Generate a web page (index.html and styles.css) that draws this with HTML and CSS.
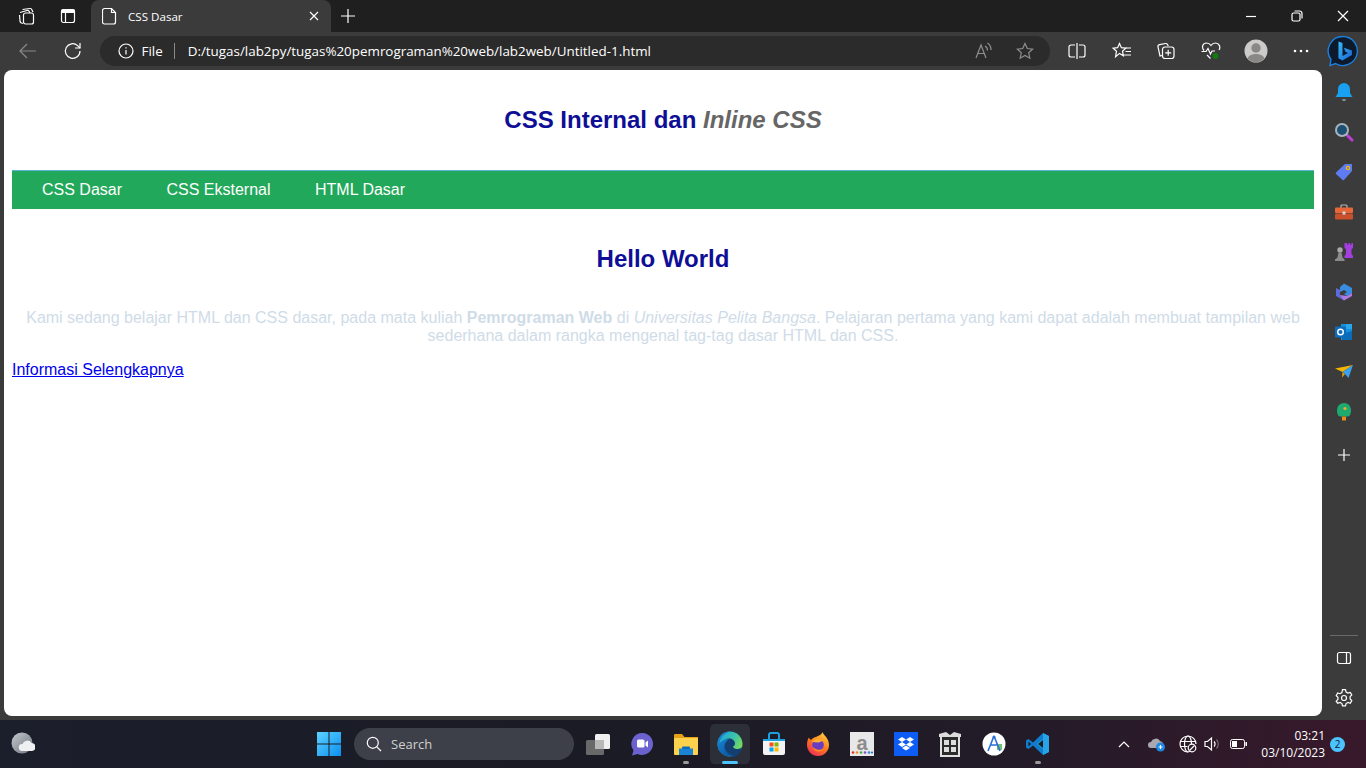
FILE: index.html
```html
<!DOCTYPE html>
<html lang="en">
<head>
  <meta charset="UTF-8">
  <meta name="viewport" content="width=device-width, initial-scale=1.0">
  <title>CSS Dasar</title>
  <link rel="stylesheet" href="styles.css">
</head>
<body>
  <div class="browser">
    <!-- tab strip -->
    <div class="tabstrip">
      <div class="strip-btn first">
        <svg width="20" height="20" viewBox="0 0 20 20" class="line"><path d="M6.5 3.5 14 2.5a2 2 0 0 1 2 1.5l1 2"/><path d="M4 6.5 11 4.5a2 2 0 0 1 2.5 1.5l.5 1"/><path d="M3.5 9l.6 6.5a2 2 0 0 0 1.4 1.5l1.5.5"/><rect x="7.5" y="7" width="10" height="11" rx="2"/></svg>
      </div>
      <div class="strip-btn">
        <svg width="18" height="18" viewBox="0 0 18 18" class="line"><rect x="2.5" y="2.5" width="13" height="13" rx="2"/><path d="M2.5 5.5h13M6.5 5.5v10"/><path d="M3 3h12v2.5H3z" fill="#fff"/></svg>
      </div>
      <div class="tab">
        <svg width="16" height="18" viewBox="0 0 16 18" class="line"><path d="M2.5 1.5h7l4 4v9.500a2 2 0 0 1-2 2h-9a2 2 0 0 1-2-2v-11.500a2 2 0 0 1 2-2z"/><path d="M9.500 1.500v4h4"/></svg>
        <span class="tab-title">CSS Dasar</span>
        <svg class="tab-close line" width="10" height="10" viewBox="0 0 10 10"><path d="M1 1l8 8M9 1l-8 8"/></svg>
      </div>
      <div class="new-tab">
        <svg width="16" height="16" viewBox="0 0 16 16" class="line"><path d="M8 1v14M1 8h14"/></svg>
      </div>
      <div class="win-controls">
        <div class="win-btn"><svg width="12" height="12" viewBox="0 0 12 12" class="line"><path d="M1 6.500h10"/></svg></div>
        <div class="win-btn"><svg width="12" height="12" viewBox="0 0 12 12" class="line"><rect x="1" y="3" width="8" height="8" rx="1.500"/><path d="M3.500 1h5a2.500 2.500 0 0 1 2.500 2.500v5"/></svg></div>
        <div class="win-btn"><svg width="12" height="12" viewBox="0 0 12 12" class="line"><path d="M1 1l10 10M11 1l-10 10"/></svg></div>
      </div>
    </div>

    <!-- address bar row -->
    <div class="toolbar">
      <div class="tool-btn dim">
        <svg width="20" height="20" viewBox="0 0 20 20" class="line"><path d="M18 10H2M9 3l-7 7 7 7"/></svg>
      </div>
      <div class="tool-btn">
        <svg width="20" height="20" viewBox="0 0 20 20" class="line"><path d="M17 10a7.300 7.300 0 1 1-2.400-5.400L17 7"/><path d="M17 2v5h-5"/></svg>
      </div>
      <div class="addressbar">
        <svg width="16" height="16" viewBox="0 0 16 16" class="line"><circle cx="8" cy="8" r="7"/><path d="M8 7v4.500M8 4.300v1.200"/></svg>
        <span class="addr-scheme">File</span>
        <span class="addr-sep"></span>
        <span class="addr-url">D:/tugas/lab2py/tugas%20pemrograman%20web/lab2web/Untitled-1.html</span>
        <span class="addr-right">
          <svg width="20" height="18" viewBox="0 0 20 18" class="line grey"><path d="M2 16 7 3l5 13M3.800 11.500h6.400"/><path d="M11 4a5 5 0 0 1 2.500 4.500M13.500 1a8 8 0 0 1 3.500 7"/></svg>
          <svg width="18" height="18" viewBox="0 0 18 18" class="line grey"><path d="M9 1.500l2.300 5 5.400.6-4 3.700 1.100 5.400L9 13.500l-4.800 2.700 1.100-5.400-4-3.700 5.400-.6z"/></svg>
        </span>
      </div>
      <div class="tool-group">
        <div class="tool-btn">
          <svg width="18" height="18" viewBox="0 0 18 18" class="line"><path d="M7 3H3a2 2 0 0 0-2 2v8a2 2 0 0 0 2 2h4M11 3h4a2 2 0 0 1 2 2v8a2 2 0 0 1-2 2h-4M9 1v16"/></svg>
        </div>
        <div class="tool-btn">
          <svg width="20" height="20" viewBox="0 0 20 20" class="line"><path d="M7.500 2.500l1.900 4.200 4.400.5-3.300 3 .9 4.500-3.900-2.300-3.900 3.300.9-5.500-3.300-3 4.400-.5z"/><path d="M13.500 7h5.500M13.500 10.500h5.500M11.500 14h7.500"/></svg>
        </div>
        <div class="tool-btn">
          <svg width="20" height="20" viewBox="0 0 20 20" class="line"><path d="M6 14.500 4 15 2 6a2 2 0 0 1 1.500-2.300l6-1.200a2 2 0 0 1 2 1l.8 1.500"/><rect x="6.500" y="6" width="11.500" height="11.500" rx="2.500"/><path d="M12.200 8.800v6M9.200 11.800h6"/></svg>
        </div>
        <div class="tool-btn health">
          <svg width="20" height="20" viewBox="0 0 20 20" class="line"><path d="M3 9.500C0 6 2 2 5.500 2c2 0 3.500 1 4.500 2.500C11 3 12.500 2 14.500 2 18 2 20 6 18 9M.5 10.500h4.500l2-3 2.500 5.500 1.500-3h3M6 14l3.500 3.500"/><circle cx="14.500" cy="15" r="3.500" fill="#107c10" stroke="#3b3b3b"/></svg>
        </div>
        <div class="tool-btn">
          <svg width="24" height="24" viewBox="0 0 24 24"><circle cx="12" cy="12" r="11.500" fill="#cdcbc9"/><circle cx="12" cy="9" r="4.700" fill="#8a8886"/><path d="M3.500 19.500c1.500-3.500 5-4.500 8.500-4.500s7 1 8.500 4.500a11.500 11.500 0 0 1-17 0z" fill="#8a8886"/></svg>
        </div>
        <div class="tool-btn">
          <svg width="16" height="4" viewBox="0 0 16 4"><circle cx="2" cy="2" r="1.300" fill="#fff"/><circle cx="8" cy="2" r="1.300" fill="#fff"/><circle cx="14" cy="2" r="1.300" fill="#fff"/></svg>
        </div>
      </div>
      <div class="bing-btn">
        <svg width="32" height="32" viewBox="0 0 32 32">
          <defs><linearGradient id="bingGrad" x1="0" y1="0" x2="1" y2="1"><stop offset="0" stop-color="#36bdf4"/><stop offset="1" stop-color="#1a62d8"/></linearGradient></defs>
          <path d="M16 1.500a14.500 14.500 0 1 1-7.500 27L3 30.500l1-6A14.500 14.500 0 0 1 16 1.500z" fill="#0c1a2c" stroke="#1b7fdc" stroke-width="1.400"/>
          <path d="M11.500 6.500l4 1.500v13l5.500-3-2.500-1.300-1.600-4 8 2.800v4.500l-9.500 5.500-4-2.300z" fill="url(#bingGrad)"/>
        </svg>
      </div>
    </div>

    <div class="workspace">
      <!-- rendered page -->
      <main class="page">
        <header class="site-head">
          <h1>CSS Internal dan <em class="grey-em">Inline CSS</em></h1>
        </header>
        <nav class="site-nav">
          <ul>
            <li><a href="#">CSS Dasar</a></li>
            <li><a href="#">CSS Eksternal</a></li>
            <li><a href="#">HTML Dasar</a></li>
          </ul>
        </nav>
        <h2>Hello World</h2>
        <p class="intro">Kami sedang belajar HTML dan CSS dasar, pada mata kuliah <strong>Pemrograman Web</strong> di <em>Universitas Pelita Bangsa</em>. Pelajaran pertama yang kami dapat adalah membuat tampilan web sederhana dalam rangka mengenal tag-tag dasar HTML dan CSS.</p>
        <a class="more" href="#">Informasi Selengkapnya</a>
      </main>

      <!-- edge sidebar -->
      <aside class="sidebar">
        <div class="side-icon"><svg width="18" height="20" viewBox="0 0 18 20"><path d="M9 1a6 6 0 0 1 6 6v4l2.500 4H.5L3 11V7a6 6 0 0 1 6-6z" fill="#1aa0f0"/><path d="M6.500 17.500h5L9 19z" fill="#9fd4f5"/></svg></div>
        <div class="side-icon"><svg width="20" height="20" viewBox="0 0 20 20"><circle cx="8" cy="8" r="6" fill="#1d4f73" stroke="#a8b4bc" stroke-width="2"/><path d="M12.500 12.500l2 2" stroke="#a8b4bc" stroke-width="2"/><path d="M14 14l4 4" stroke="#c13bd8" stroke-width="3" stroke-linecap="round"/></svg></div>
        <div class="side-icon"><svg width="18" height="18" viewBox="0 0 18 18"><path d="M10 1h6.500a.5.5 0 0 1 .5.500V8l-8 9a1 1 0 0 1-1.400 0L1 11a1 1 0 0 1 0-1.400z" fill="#5e7bf2"/><circle cx="13" cy="5" r="1.700" fill="none" stroke="#f5b800" stroke-width="1.200"/></svg></div>
        <div class="side-icon"><svg width="18" height="16" viewBox="0 0 18 16"><path d="M6 4V2a1 1 0 0 1 1-1h4a1 1 0 0 1 1 1v2" fill="none" stroke="#b8b8b8" stroke-width="1.200"/><rect y="3.500" width="18" height="5.500" rx="1" fill="#e8663a"/><rect y="9.500" width="18" height="6" rx="1" fill="#c8502a"/><rect x="7.500" y="7.500" width="3" height="3" rx=".5" fill="#d8d8d8"/></svg></div>
        <div class="side-icon"><svg width="18" height="20" viewBox="0 0 18 20"><path d="M10 1h2v1.500h1.500V1h1.500v1.500h1.500V1H18v5l-1.500 1v5l1.500 2v2H9.500v-2l1.500-2V7L9.500 6V1z" fill="#a33fe0"/><circle cx="5" cy="8" r="2.700" fill="#a8a8a8"/><path d="M3.500 10.500h3l1 5 2 2V19H0v-1.500l2.500-2z" fill="#8c8c8c"/></svg></div>
        <div class="side-icon"><svg width="18" height="18" viewBox="0 0 18 18"><path d="M9 .5 17 5v5l-5 3-3-2 3-2-3-2-4 2V4z" fill="#3a8ce0"/><path d="M1 5l4 2v5l5 3-1 2.500L1 13z" fill="#5c6bd8"/><path d="M5 12l7 1 5-3v3l-8 4.500z" fill="#b07ae0"/></svg></div>
        <div class="side-icon"><svg width="18" height="18" viewBox="0 0 18 18"><path d="M6 1h10a1 1 0 0 1 1 1v14a1 1 0 0 1-1 1H6z" fill="#1490df"/><path d="M11 1h6v5h-6z" fill="#28a8ea"/><path d="M7 11l10-3v9H7z" fill="#0a6cb8"/><rect y="3.500" width="11" height="11" rx="1" fill="#0f6cbd"/><circle cx="5.500" cy="9" r="2.800" fill="none" stroke="#fff" stroke-width="1.400"/></svg></div>
        <div class="side-icon"><svg width="18" height="14" viewBox="0 0 18 14"><path d="M0 3.500 18 0 7.500 7z" fill="#f5b400"/><path d="M18 0 7.500 7l1.500 1 1 1 3.500 4z" fill="#3aa0f0"/><path d="M7.500 7 7 12.500 10 9z" fill="#e8a000"/></svg></div>
        <div class="side-icon"><svg width="16" height="20" viewBox="0 0 16 20"><path d="M8 1c4 0 7 3 7 7.500 0 2.500-1 6-3 6H4c-2 0-3-3.500-3-6C1 4 4 1 8 1z" fill="#1eaa6e"/><rect x="6" y="14.500" width="4" height="4" fill="#e88a1a"/><circle cx="9" cy="6.500" r="1.600" fill="#f0a830"/></svg></div>
        <div class="side-icon side-add"><svg width="14" height="14" viewBox="0 0 14 14" class="line"><path d="M7 1v12M1 7h12"/></svg></div>
        <div class="side-bottom">
          <div class="side-rule"></div>
          <div class="side-icon"><svg width="16" height="14" viewBox="0 0 16 14" class="line"><rect x="1.500" y="1.500" width="13" height="11" rx="2"/><path d="M10.500 1.500v11"/></svg></div>
          <div class="side-icon"><svg width="18" height="18" viewBox="0 0 18 18" class="line"><path d="M7.500 1.500h3l.6 2.300 1.900 1.100 2.300-.7 1.500 2.600-1.700 1.700v2.200l1.700 1.700-1.500 2.600-2.300-.7-1.900 1.100-.6 2.300h-3l-.6-2.300-1.900-1.100-2.300.7L1.200 13l1.700-1.700V9.100L1.200 7.400l1.500-2.600 2.300.7 1.900-1.100z" transform="translate(0 -.8)"/><circle cx="9" cy="9" r="2.500"/></svg></div>
        </div>
      </aside>
    </div>

    <!-- windows taskbar -->
    <footer class="taskbar">
      <div class="weather">
        <svg width="24" height="24" viewBox="0 0 24 24"><defs><linearGradient id="moonGrad" x1="0" y1="0" x2="1" y2="1"><stop offset="0" stop-color="#c4c9ce"/><stop offset="1" stop-color="#6d747b"/></linearGradient></defs><circle cx="11" cy="11" r="10.500" fill="url(#moonGrad)"/><path d="M11 21a3.500 3.500 0 0 1 .5-7 5 5 0 0 1 9-1 4 4 0 0 1 2 7.500 3 3 0 0 1-1.500.500z" fill="#eef0f2" transform="translate(0 -2)"/></svg>
      </div>
      <div class="task-center">
        <div class="task-start">
          <svg width="24" height="24" viewBox="0 0 24 24"><defs><linearGradient id="winGrad" x1="0" y1="0" x2="1" y2="1"><stop offset="0" stop-color="#5cd3ff"/><stop offset="1" stop-color="#0c8ff0"/></linearGradient></defs><path d="M0 0h11.500v11.500H0zM12.500 0H24v11.500H12.500zM0 12.500h11.500V24H0zM12.500 12.500H24V24H12.500z" fill="url(#winGrad)"/></svg>
        </div>
        <div class="task-search">
          <svg width="16" height="16" viewBox="0 0 16 16" class="line"><circle cx="6.800" cy="6.800" r="5.500"/><path d="M10.800 10.800 15 15"/></svg>
          <span>Search</span>
        </div>
        <div class="task-apps">
          <div class="task-app"><svg width="24" height="22" viewBox="0 0 24 22"><rect x="9" y="1" width="15" height="15" rx="1.500" fill="#f0f0f0"/><rect y="7" width="18" height="15" rx="1.500" fill="#6e6e6e" opacity=".95"/><rect x="9" y="7" width="9" height="9" fill="#b8b8b8"/></svg></div>
          <div class="task-app"><svg width="24" height="24" viewBox="0 0 24 24"><path d="M12.500 1a11 11 0 1 1-5 21L2 23.500l1.500-5A11 11 0 0 1 12.500 1z" fill="#6b62cf"/><rect x="7" y="7.500" width="7.500" height="8" rx="1.500" fill="#fff"/><path d="M15.500 10.500 18 8.500v7l-2.500-2z" fill="#fff"/></svg></div>
          <div class="task-app running"><svg width="24" height="22" viewBox="0 0 24 22"><path d="M0 2a1 1 0 0 1 1-1h7l2.500 3H24v4H0z" fill="#e6a117"/><rect y="5" width="24" height="17" rx="1" fill="#ffd24d"/><path d="M5 15.500h14v6.500H5z" fill="#1b83d4"/><rect x="8" y="13.500" width="8" height="2.500" rx="1" fill="#0f6cbd"/></svg></div>
          <div class="task-app active"><svg width="26" height="26" viewBox="0 0 26 26"><defs><linearGradient id="edgeGreen" x1="0" y1="0" x2="1" y2=".6"><stop offset="0" stop-color="#1b9de2"/><stop offset=".55" stop-color="#35c1b0"/><stop offset="1" stop-color="#7fdc55"/></linearGradient><linearGradient id="edgeBlue" x1="0" y1="0" x2=".6" y2="1"><stop offset="0" stop-color="#1a8fe0"/><stop offset="1" stop-color="#0c59a4"/></linearGradient></defs><circle cx="13" cy="13" r="12.500" fill="url(#edgeGreen)"/><path d="M25.500 15c-.5 2-3.500 3.500-6.500 3-2-.3-3-1.500-3-2.500 1-.5 2-1.500 2-3 0-3-3-5-6-5-3 0-5 2-6 5v6c2 4 6 7.500 9.500 7.500 5 0 9.500-5 10-11z" fill="#123e70"/><path d="M13 .5C6 .5.500 6 .5 13c0 7 5.500 12.500 12.500 12.500 1.500 0 3-.3 4-1-5-.5-9-4-9.500-8.500-.3-3 1.500-6 4.500-7.500C9 7.500 5 9 2.500 12 3.500 6 8 2 13 .5z" fill="url(#edgeBlue)"/></svg></div>
          <div class="task-app"><svg width="24" height="24" viewBox="0 0 24 24"><path d="M1 7h22v14a2 2 0 0 1-2 2H3a2 2 0 0 1-2-2z" fill="#f3f3f3"/><path d="M7 8V3a2 2 0 0 1 2-2h6a2 2 0 0 1 2 2v5" fill="none" stroke="#1ca0e0" stroke-width="2"/><path d="M1 7h22v2H1z" fill="#1ca0e0"/><rect x="7.500" y="10.500" width="4" height="4" fill="#f25022"/><rect x="12.500" y="10.500" width="4" height="4" fill="#7fba00"/><rect x="7.500" y="15.500" width="4" height="4" fill="#00a4ef"/><rect x="12.500" y="15.500" width="4" height="4" fill="#ffb900"/></svg></div>
          <div class="task-app"><svg width="24" height="24" viewBox="0 0 24 24"><defs><linearGradient id="foxGrad" x1=".8" y1="0" x2=".2" y2="1"><stop offset="0" stop-color="#ffd33d"/><stop offset=".5" stop-color="#ff7a1f"/><stop offset="1" stop-color="#ee2a5a"/></linearGradient></defs><path d="M16.500 0c.5 3 6.500 5.500 6.500 13a11 11 0 0 1-22 0c0-3 .5-5.500 2-7.500.5 1 1 2 2 2.500 1-1.500 2.500-2.500 4.500-3 2.500-.8 6-2 7-5z" fill="url(#foxGrad)"/><circle cx="12" cy="13" r="5.800" fill="#6a3cc4"/><path d="M6 10c2-3.500 8-4.500 11-1-2 .2-3 1.500-5 1.500S8 10 6 10z" fill="#ffb02e"/><path d="M6.500 15c1 3 3.500 5 7 4.500 1.500-.2 3-1 4-2.500-3 1.500-7 1-11-2z" fill="#ff8a1f"/></svg></div>
          <div class="task-app"><svg width="24" height="24" viewBox="0 0 24 24"><rect width="24" height="24" fill="#e8e8e8"/><text x="12" y="18" class="amazon-a">a</text><g><circle cx="3" cy="20.500" r="1.300" fill="#e52b2b"/><circle cx="7" cy="20.500" r="1.300" fill="#f58a1f"/><circle cx="11" cy="20.500" r="1.300" fill="#3fae49"/><circle cx="15" cy="20.500" r="1.300" fill="#8a4fc0"/><circle cx="19" cy="20.500" r="1.300" fill="#2a8fe0"/><circle cx="22" cy="20.500" r="1" fill="#1565c0"/></g></svg></div>
          <div class="task-app"><svg width="24" height="24" viewBox="0 0 24 24"><rect width="24" height="24" fill="#0d5cf5"/><path d="M8 5l4 2.500L8 10 4 7.500zM16 5l4 2.500-4 2.500-4-2.500zM8 10l4 2.500L8 15l-4-2.500zM16 10l4 2.500-4 2.500-4-2.500zM8 16l4-2.500 4 2.500-4 2.500z" fill="#fff"/></svg></div>
          <div class="task-app"><svg width="22" height="26" viewBox="0 0 22 26"><path d="M2 5h18v20H2z" fill="#2b2b2b" stroke="#e0e0e0" stroke-width="2"/><path d="M0 3l7-2 4 3 4-3 7 2v3H0z" fill="#dcdcdc"/><rect x="5" y="9" width="5" height="5" fill="#dcdcdc"/><rect x="12" y="9" width="5" height="5" fill="#dcdcdc"/><rect x="5" y="16" width="5" height="5" fill="#dcdcdc"/><rect x="12" y="16" width="5" height="5" fill="#dcdcdc"/></svg></div>
          <div class="task-app"><svg width="24" height="24" viewBox="0 0 24 24"><circle cx="12" cy="12" r="11.500" fill="#fff"/><path d="M15 12h5v6h-5z" fill="#6ec56e"/><path d="M12 4 6 19M12 4l6 15M8.500 13h7" fill="none" stroke="#2a6fd8" stroke-width="1.600"/><circle cx="12" cy="5" r="1.500" fill="#2a6fd8"/></svg></div>
          <div class="task-app running"><svg width="24" height="24" viewBox="0 0 24 24"><path d="M17 1l6 3v16l-6 3L7 13.500 2.500 17 0 15.500V8.500L2.500 7 7 10.500z" fill="#0f7dcc"/><path d="M17 1l6 3v16l-6 3zM17 7l-6 5 6 5z" fill="#28a3e8"/><path d="M2.500 9.500v5L5 12z" fill="#1b1c25"/><path d="M17 8v8l-5-4z" fill="#1b1c25"/></svg></div>
        </div>
      </div>
      <div class="tray">
        <svg class="tray-chevron line" width="12" height="8" viewBox="0 0 12 8"><path d="M1 7l5-5 5 5"/></svg>
        <svg class="tray-cloud" width="18" height="16" viewBox="0 0 18 16"><path d="M3 12a3 3 0 0 1 0-6 5 5 0 0 1 9-1 4 4 0 0 1 2 7z" fill="#a9a9ad"/><circle cx="12.500" cy="11" r="4.500" fill="#1e88e5"/><path d="M10.500 11h4M12.500 9v4" stroke="#fff" stroke-width="1.200"/></svg>
        <svg class="tray-globe line" width="18" height="18" viewBox="0 0 18 18"><path d="M9 17a8 8 0 1 1 8-8"/><ellipse cx="9" cy="9" rx="3.500" ry="8"/><path d="M1.500 6.500h15M1.500 11.500h7"/><circle cx="13" cy="13" r="3.800" fill="#2a1a28"/><path d="M10.500 15.500l5-5"/></svg>
        <svg class="tray-sound line" width="16" height="16" viewBox="0 0 16 16"><path d="M1 5.500h2.500L7.500 2v12l-4-3.500H1z"/><path d="M10 5.500a3.500 3.500 0 0 1 0 5"/><path d="M12.500 3.500a6.500 6.500 0 0 1 0 9" opacity=".35"/></svg>
        <svg class="tray-battery" width="17" height="10" viewBox="0 0 17 10"><rect x=".5" y=".5" width="14" height="9" rx="2" fill="none" stroke="#fff"/><rect x="2" y="2" width="5" height="6" fill="#fff"/><rect x="15.500" y="3" width="1.500" height="4" fill="#fff"/></svg>
        <div class="clock">
          <span>03:21</span>
          <span>03/10/2023</span>
        </div>
        <div class="notif">2</div>
      </div>
    </footer>
  </div>
</body>
</html>
```

FILE: styles.css
```css
* {
  box-sizing: border-box;
}
html, body {
  margin: 0;
  height: 100%;
  overflow: hidden;
}
body {
  font-family: "Liberation Sans", Arial, sans-serif;
  background: #3b3b3b;
}
.browser {
  display: flex;
  flex-direction: column;
  width: 1366px;
  height: 768px;
}
.line {
  fill: none;
  stroke: #fff;
  stroke-width: 1.2;
  flex: none;
}
.line.grey {
  stroke: #8f8f8f;
}

/* tab strip */
.tabstrip {
  display: flex;
  align-items: flex-end;
  height: 32px;
  background: #1f1f1f;
}
.strip-btn {
  display: flex;
  align-items: center;
  justify-content: center;
  width: 42px;
  height: 32px;
}
.strip-btn.first {
  margin-left: 5px;
}
.tab {
  display: flex;
  align-items: center;
  width: 240px;
  height: 32px;
  margin-left: 2px;
  padding: 0 11px;
  background: #3b3b3b;
  border-radius: 8px 8px 0 0;
}
.tab-title {
  margin-left: 10px;
  font: 11.600px "Open Sans", "Noto Sans", sans-serif;
  color: #fff;
}
.tab-close {
  margin-left: auto;
  margin-right: 1px;
}
.new-tab {
  display: flex;
  align-items: center;
  justify-content: center;
  width: 34px;
  height: 32px;
}
.win-controls {
  display: flex;
  margin-left: auto;
}
.win-btn {
  display: flex;
  align-items: center;
  justify-content: center;
  width: 46px;
  height: 32px;
}

/* toolbar */
.toolbar {
  display: flex;
  align-items: center;
  height: 38px;
  padding-left: 6px;
  background: #3b3b3b;
}
.tool-btn {
  display: flex;
  align-items: center;
  justify-content: center;
  flex: none;
  width: 44.5px;
  height: 30px;
}
.tool-btn.dim {
  opacity: 0.4;
}
.addressbar {
  display: flex;
  align-items: center;
  flex: none;
  width: 950px;
  height: 30px;
  margin-left: 4.500px;
  padding: 0 16px 0 18px;
  background: #2b2b2b;
  border-radius: 15px;
  color: #fff;
  font: 13.400px "Open Sans", "Noto Sans", sans-serif;
}
.addr-scheme {
  margin-left: 8px;
}
.addr-sep {
  width: 1px;
  height: 16px;
  margin: 0 13px 0 11px;
  background: #8a8a8a;
}
.addr-url {
  white-space: nowrap;
}
.addr-right {
  display: flex;
  align-items: center;
  gap: 22px;
  margin-left: auto;
}
.tool-group {
  display: flex;
  margin-left: 5px;
}
.tool-group .tool-btn {
  width: 44.800px;
}
.bing-btn {
  display: flex;
  align-items: center;
  justify-content: center;
  width: 44px;
  margin-left: -2px;
}

/* workspace */
.workspace {
  display: flex;
  height: 650px;
}
.page {
  width: 1318px;
  height: 646px;
  margin-left: 4px;
  padding: 8px;
  background: #fff;
  border-radius: 8px;
  color: #000;
  font-size: 16px;
}
.site-head {
  padding: 12px 0 20px;
}
.page h1 {
  margin: 16px 0;
  font-size: 24px;
  line-height: 28px;
  text-align: center;
  color: #0e0e96;
}
.grey-em {
  color: #666;
}
.site-nav {
  height: 39px;
  background: #22a85a;
  border-top: 1px solid #5ab4d8;
}
.site-nav ul {
  margin: 0;
  padding: 0 10px;
  list-style: none;
}
.site-nav li {
  display: inline;
}
.site-nav a {
  display: inline-block;
  padding: 0 20px;
  line-height: 37px;
  color: #fff;
  text-decoration: none;
}
.page h2 {
  margin: 36px 0 0;
  font-size: 24px;
  line-height: 28px;
  text-align: center;
  color: #0e0e96;
}
.intro {
  margin: 36px 0 16px;
  line-height: 18px;
  text-align: center;
  color: #cfdce8;
}
.more {
  color: #0000ee;
}

/* sidebar */
.sidebar {
  display: flex;
  flex-direction: column;
  align-items: center;
  width: 44px;
  height: 650px;
  padding-top: 2px;
  background: #3b3b3b;
}
.side-icon {
  display: flex;
  align-items: center;
  justify-content: center;
  flex: none;
  width: 44px;
  height: 40px;
}
.side-add {
  margin-top: 3px;
}
.side-bottom {
  display: flex;
  flex-direction: column;
  align-items: center;
  margin-top: auto;
  margin-bottom: 2px;
}
.side-rule {
  width: 28px;
  height: 1px;
  margin-bottom: 2px;
  background: #6a6a6a;
}

/* taskbar */
.taskbar {
  display: flex;
  align-items: center;
  position: relative;
  height: 48px;
  background: linear-gradient(90deg, #1b1e2b 0%, #1a1b24 45%, #231b28 75%, #38192b 100%);
}
.weather {
  display: flex;
  width: 46px;
  padding-left: 11px;
}
.task-center {
  display: flex;
  align-items: center;
  margin-left: 271px;
}
.task-start {
  display: flex;
  margin-right: 13px;
}
.task-search {
  display: flex;
  align-items: center;
  gap: 9px;
  width: 220px;
  height: 32px;
  padding-left: 12px;
  background: #3d4048;
  border-radius: 16px;
  color: #d0d0d0;
  font: 13px "Open Sans", "Noto Sans", sans-serif;
}
.task-apps {
  display: flex;
  margin-left: 2px;
}
.task-app {
  display: flex;
  align-items: center;
  justify-content: center;
  position: relative;
  width: 44px;
  height: 40px;
}
.task-app.active {
  padding: 0 2px;
  background: #2d2f38 content-box;
  border-radius: 6px;
}
.task-app.active::after,
.task-app.running::after {
  content: "";
  position: absolute;
  bottom: 0;
  left: 50%;
  width: 6px;
  height: 3px;
  margin-left: -3px;
  background: #9a9a9a;
  border-radius: 2px;
}
.task-app.active::after {
  width: 16px;
  margin-left: -8px;
  background: #4cc2ff;
}
.amazon-a {
  font: bold 20px "Liberation Sans", sans-serif;
  text-anchor: middle;
  fill: #8c8c8c;
}
.tray {
  display: flex;
  align-items: center;
  flex: none;
  width: 257px;
  margin-left: 49px;
  color: #fff;
}
.tray-chevron {
  margin-left: 9px;
}
.tray-cloud {
  margin-left: 18px;
}
.tray-globe {
  margin-left: 13px;
}
.tray-sound {
  margin-left: 7px;
}
.tray-battery {
  margin-left: 10px;
}
.clock {
  display: flex;
  flex-direction: column;
  align-items: flex-end;
  width: 78px;
  font: 12px/17px "Open Sans", "Noto Sans", sans-serif;
  white-space: nowrap;
}
.notif {
  display: flex;
  align-items: center;
  justify-content: center;
  width: 15px;
  height: 15px;
  margin-left: 5px;
  background: #4cc2ff;
  border-radius: 50%;
  color: #10202c;
  font: 10px "Open Sans", "Noto Sans", sans-serif;
}
```
